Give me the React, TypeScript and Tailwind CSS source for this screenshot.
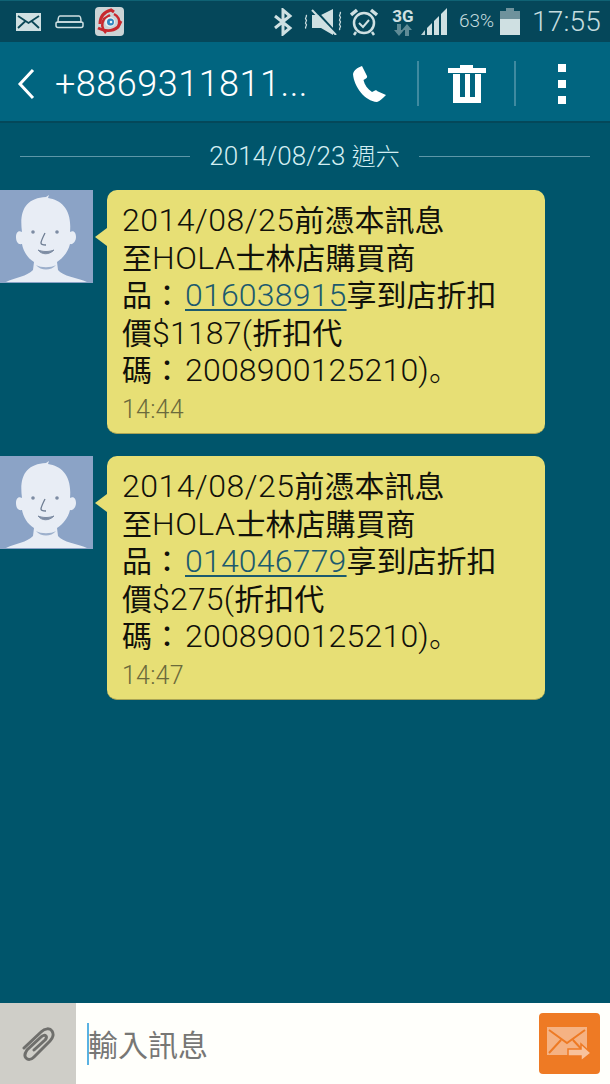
import React from 'react'

const CJK = ({ children }: { children: React.ReactNode }) => (
  <span className="text-[30px] tracking-normal font-normal font-['Noto_Sans_CJK_TC',sans-serif]">{children}</span>
)

const Line = ({ children }: { children: React.ReactNode }) => (
  <div className="h-[37.500px] whitespace-nowrap">{children}</div>
)

function EnvelopeIcon() {
  return (
    <svg width="25" height="18" viewBox="0 0 25 18">
      <rect width="25" height="18" fill="#cfe0e2" />
      <path d="M2 3l10.5 7L23 3M2 15l7.5-7M23 15l-7.5-7" fill="none" stroke="#0a4756" strokeWidth="1.8" />
    </svg>
  )
}

function DeviceIcon() {
  return (
    <svg width="29" height="16" viewBox="0 0 29 16" fill="none" stroke="#cfe0e2" strokeWidth="1.5">
      <path d="M5 2h19c1.500 0 2 2 2 6H3c0-4 .5-6 2-6z" />
      <path d="M1 9.500c0-1 1-1.500 2-1.500h23c1 0 2 .5 2 1.500v2c0 1-1 2-2 2H3c-1 0-2-1-2-2z" />
    </svg>
  )
}

function AppIcon() {
  return (
    <svg width="29" height="29" viewBox="0 0 29 29">
      <rect width="29" height="29" rx="4" fill="#cbd4d6" />
      <g fill="none" stroke="#c8282e">
        <path d="M5 17C5 10 9 5 16 3l3 2" strokeWidth="3" />
        <path d="M3 21c6 3 14 4 20-1l3-6" strokeWidth="3" />
        <path d="M11 26C7 22 6 17 9 12l6-4" strokeWidth="2.500" />
        <path d="M19 7c4 2 6 6 5 11" strokeWidth="2.500" />
      </g>
      <circle cx="15" cy="15" r="5" fill="#e9eef0" />
      <circle cx="15.500" cy="15" r="3.500" fill="#2f86c0" />
      <circle cx="16" cy="15" r="1.300" fill="#eaf2f5" />
    </svg>
  )
}

function BluetoothIcon() {
  return (
    <svg width="20" height="28" viewBox="0 0 20 28" fill="none" stroke="#cfe0e2" strokeWidth="3">
      <path d="M2 8l15 12-7 6V2l7 6L2 20" />
    </svg>
  )
}

function MuteIcon() {
  return (
    <svg width="38" height="26" viewBox="0 0 38 26">
      <path d="M2 6c2 1.500-2 3 0 4.500s-2 3 0 4.500-2 3 0 4.500" fill="none" stroke="#cfe0e2" strokeWidth="1.300" />
      <path d="M8 6h9l12-6v26L17 19H8z" fill="#cfe0e2" />
      <path d="M36 3c2 1.500-2 3 0 4.500s-2 3 0 4.500-2 3 0 4.500-2 3 0 4.500" fill="none" stroke="#cfe0e2" strokeWidth="1.300" />
      <path d="M10 0l24 26" stroke="#05475a" strokeWidth="2.500" />
      <path d="M8 1l24 25" stroke="#cfe0e2" strokeWidth="2" />
    </svg>
  )
}

function AlarmIcon() {
  return (
    <svg width="28" height="28" viewBox="0 0 28 28" fill="none" stroke="#cfe0e2">
      <circle cx="14" cy="15" r="10" strokeWidth="2.500" />
      <path d="M9 15l4 4 6-7" strokeWidth="2" />
      <path d="M1 7l6-5M27 7l-6-5" strokeWidth="3.500" />
      <path d="M6 24l-2 3M22 24l2 3" strokeWidth="2.500" />
    </svg>
  )
}

function SignalIcon() {
  return (
    <svg width="27" height="27" viewBox="0 0 27 27" fill="#cfe0e2">
      <path d="M0 27l4-5v5z" opacity="0.9" />
      <path d="M6 27v-7l5-5v12z" />
      <path d="M13 27V13l5-5v19z" />
      <path d="M20 27V6l6-6v27z" />
    </svg>
  )
}

function BatteryIcon() {
  return (
    <svg width="20" height="27" viewBox="0 0 20 27">
      <path d="M6 0h8v3h6v24H0V3h6z" fill="#6f929c" />
      <rect y="11" width="20" height="16" fill="#cfe0e2" />
    </svg>
  )
}

function PhoneIcon() {
  return (
    <svg width="34" height="38" viewBox="0 0 34 38" fill="#fff">
      <path d="M9 1l5 10c.4 1-.1 2-1 2.500l-2.500 1.500c1 5 4 9 8.500 12l3-1.500c1-.4 2 0 2.500.8L33 30c-3 3-6 6-9 7C12 36 1 22 0 9c1-4 4-6 9-8z" />
    </svg>
  )
}

function TrashIcon() {
  return (
    <svg width="38" height="38" viewBox="0 0 38 38" fill="#fff">
      <path d="M12 0h13v3h13v5H0V3h12z" />
      <path d="M5 9h7v23h5V9h5v23h5V9h6v29H5z" />
    </svg>
  )
}

function ClipIcon() {
  return (
    <svg width="34" height="36" viewBox="0 0 34 36" fill="none" stroke="#6f6f6c" strokeWidth="3" strokeLinecap="round">
      <path d="M3 22L20 6c4-4 9-4 11-1s1 7-2 10L13 31c-3 3-6 3-8 1s-1-5 1-8l14-13c2-2 4-2 5-1s0 3-1 4L13 24" />
    </svg>
  )
}

function SendIcon() {
  return (
    <svg width="45" height="34" viewBox="0 0 45 34">
      <rect width="40" height="28" fill="#f5b283" />
      <path d="M2 3l18 13L38 3M2 26l12-13M38 26L26 13" fill="none" stroke="#ee7a24" strokeWidth="2" />
      <path d="M21 22h13v-5l10 9-10 8v-5H21z" fill="#f8c29c" stroke="#ee7a24" strokeWidth="1.500" />
    </svg>
  )
}

function Avatar() {
  return (
    <div className="w-[93px] h-[93px] shrink-0 bg-[#8ba3c6]">
      <svg width="93" height="93" viewBox="0 0 93 93">
        <path d="M6 92C14 88 28 86 33 80L34 72C27 68 23 60 22 54C17 55 16 50 16 47C16 43 18 40 22 42C19 20 26 8 46 7L49 5L48 8C62 10 72 20 70 42C74 40 76 43 76 47C76 51 73 55 70 54C68 62 63 68 57 72L58 80C62 86 78 88 87 92Z" fill="#e8edf5" />
        <circle cx="33" cy="42" r="1.800" fill="#7d8ca3" />
        <circle cx="57" cy="42" r="1.800" fill="#7d8ca3" />
        <path d="M45 43c-2 4-4 8-4 10 0 2 2 2 5 2" fill="none" stroke="#6d7c92" strokeWidth="1.300" />
        <path d="M38 60c4 5 11 5 16 0-5 2-11 2-16 0z" fill="#7d8ca3" stroke="#7d8ca3" />
        <path d="M36 75c5 6 15 6 20 0-5 3-15 3-20 0z" fill="#9db0cc" />
      </svg>
    </div>
  )
}

function Message({ code, price, time }: { code: string; price: string; time: string }) {
  return (
    <div className="flex">
      <Avatar />
      <div className="relative ml-[14px] w-[438px] h-[244px] rounded-[10px] bg-[#e7df75] border-b border-[#a9a455] pl-[15px] pt-[10px] font-['Roboto',sans-serif] font-light text-[32px] leading-[37.500px] tracking-[0.2px] text-[#11110a]">
        <span className="absolute -left-[12px] top-[38px] w-0 h-0 border-y-[9px] border-y-transparent border-r-[12px] border-r-[#e7df75]" />
        <Line><span className="tracking-[0.500px]">2014/08/25</span><CJK>前憑本訊息</CJK></Line>
        <Line><CJK>至</CJK><span className="tracking-[0.500px]">HOLA</span><CJK>士林店購買商</CJK></Line>
        <Line>
          <CJK>品：</CJK>
          <span className="ml-[3px] text-[#1c5a6e] underline underline-offset-[3px] decoration-2">{code}</span>
          <CJK>享到店折扣</CJK>
        </Line>
        <Line><CJK>價</CJK>${price}(<CJK>折扣代</CJK></Line>
        <Line>
          <CJK>碼：</CJK><span className="ml-[3px]">2008900125210)</span>
          <span className="text-[30px] font-['Noto_Sans_CJK_JP',sans-serif]">。</span>
        </Line>
        <div className="mt-[3px] text-[25px] leading-[38px] font-light text-[#6b6a3c]">{time}</div>
      </div>
    </div>
  )
}

export default function App() {
  return (
    <div className="flex flex-col w-[610px] h-[1084px] overflow-hidden bg-[#00556b] font-['Roboto',sans-serif]">
      {/* Status bar */}
      <div className="flex items-center h-[42px] shrink-0 bg-[#05475a] border-t border-[#0f6274] text-[#c4dcdf]">
        <div className="ml-[16px]"><EnvelopeIcon /></div>
        <div className="ml-[14px]"><DeviceIcon /></div>
        <div className="ml-[11px]"><AppIcon /></div>
        <div className="ml-[149px]"><BluetoothIcon /></div>
        <div className="ml-[11px]"><MuteIcon /></div>
        <div className="ml-[8px]"><AlarmIcon /></div>
        <div className="ml-[13px] w-[24px] flex flex-col items-center">
          <span className="text-[17px] leading-[16px] font-bold text-[#cfe0e2]">3G</span>
          <svg width="18" height="12" viewBox="0 0 18 12" fill="#5f8b96">
            <path d="M5 12L0 6h3V0h4v6h3zM13 0l5 6h-3v6h-4V6H8z" />
          </svg>
        </div>
        <div className="ml-[6px]"><SignalIcon /></div>
        <span className="ml-[11px] w-[40px] text-[19px] font-light">63%</span>
        <div className="ml-[1px]"><BatteryIcon /></div>
        <span className="ml-[12px] text-[28px] font-light tracking-[0.2px]">17:55</span>
      </div>

      {/* Header */}
      <div className="flex items-center h-[81px] shrink-0 pt-[4px] bg-[#016580] border-b-[2px] border-[#04485a] text-white">
        <svg className="ml-[17px]" width="18" height="32" viewBox="0 0 18 32" fill="none" stroke="#fff" strokeWidth="3">
          <path d="M16 2L3 16l13 14" />
        </svg>
        <span className="ml-[20px] w-[254px] text-[36px] font-light tracking-[0.5px] whitespace-nowrap">+8869311811...</span>
        <div className="ml-[44px]"><PhoneIcon /></div>
        <div className="ml-[30px] w-[2px] h-[45px] bg-[#3f8aa0]" />
        <div className="ml-[29px]"><TrashIcon /></div>
        <div className="ml-[28px] w-[2px] h-[45px] bg-[#3f8aa0]" />
        <div className="ml-[42px] flex flex-col gap-[8px]">
          <div className="w-[8px] h-[8px] bg-white" />
          <div className="w-[8px] h-[8px] bg-white" />
          <div className="w-[8px] h-[8px] bg-white" />
        </div>
      </div>

      {/* Conversation */}
      <div className="flex-1 flex flex-col">
        <div className="flex items-center h-[67px] px-[20px] shrink-0">
          <div className="w-[170px] h-[1px] bg-[#5d97a8]" />
          <span className="mx-auto text-[26px] font-light text-[#d3eef2] whitespace-nowrap">
            2014/08/23 <span className="text-[24px] font-['Noto_Sans_CJK_TC',sans-serif] font-light">週六</span>
          </span>
          <div className="w-[171px] h-[1px] bg-[#5d97a8]" />
        </div>
        <div className="flex flex-col gap-[22px]">
          <Message code="016038915" price="1187" time="14:44" />
          <Message code="014046779" price="275" time="14:47" />
        </div>
      </div>

      {/* Input */}
      <div className="flex h-[81px] shrink-0 bg-[#fffffb]">
        <div className="w-[76px] flex items-center justify-center bg-[#cfcec8]"><ClipIcon /></div>
        <div className="flex flex-1 items-center pl-[11px]">
          <div className="w-[2px] h-[42px] bg-[#5ab2e2]" />
          <span className="text-[30px] font-['Noto_Sans_CJK_TC',sans-serif] text-[#777775] -ml-[1px]">輸入訊息</span>
        </div>
        <div className="w-[61px] h-[61px] mt-[10px] mr-[10px] flex items-center justify-center rounded-[4px] bg-[#ee7a24]"><SendIcon /></div>
      </div>
    </div>
  )
}
